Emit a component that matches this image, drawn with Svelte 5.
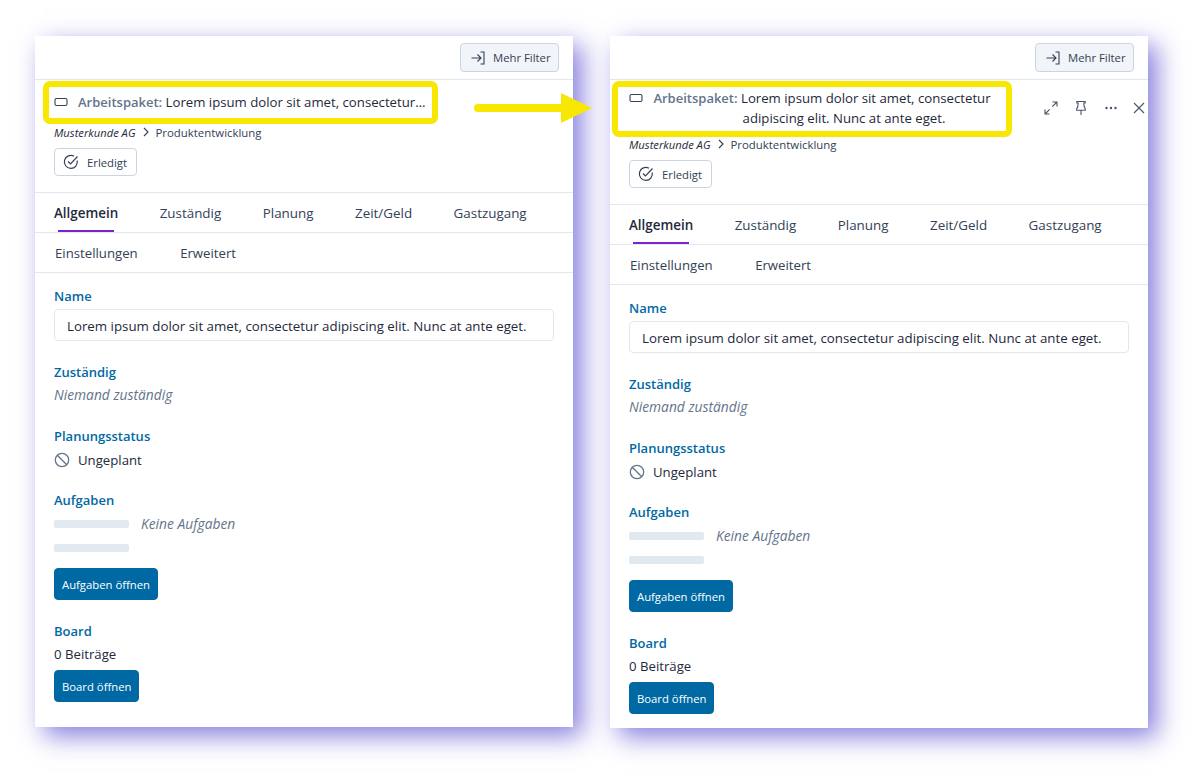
<script>
  const tabs = ['Allgemein', 'Zuständig', 'Planung', 'Zeit/Geld', 'Gastzugang'];
  const tabs2 = ['Einstellungen', 'Erweitert'];
  const title = 'Lorem ipsum dolor sit amet, consectetur adipiscing elit. Nunc at ante eget.';
</script>

{#snippet panel(open)}
  <section class="panel" class:open>
    <div class="topbar">
      <button class="filter">
        <svg width="16" height="16" viewBox="0 0 16 16" fill="none" stroke="#334155" stroke-width="1.1">
          <path d="M1.5 8h9M7.5 4.5 11 8l-3.5 3.5M10.5 2h3.5v12h-3.5" />
        </svg>
        Mehr Filter
      </button>
    </div>

    <div class="head">
      <div class="titlerow">
        <svg class="wp" width="14" height="10" viewBox="0 0 14 10" fill="none" stroke="#334155" stroke-width="1.1">
          <rect x="1" y="1.5" width="12" height="7" rx="1.5" />
        </svg>
        <h1 class="title">
          <span class="kind">Arbeitspaket:</span>
          {title}
        </h1>
        <div class="mark"></div>
        {#if open}
          <div class="actions">
            <svg width="16" height="16" viewBox="0 0 16 16" fill="none" stroke="#475569" stroke-width="1.1">
              <path d="M2 14 6.700 9.300M9.300 6.700 14 2M9.500 2H14v4.500M2 9.500V14h4.500" />
            </svg>
            <svg width="16" height="16" viewBox="0 0 16 16" fill="none" stroke="#475569" stroke-width="1.1">
              <path d="M3.800 1.500h8.400v1.500H10.800c0 3 .5 4.500 1.500 6v1.300H3.700V9c1-1.500 1.500-3 1.500-6H3.800zM8 10.300V15" />
            </svg>
            <svg width="16" height="16" viewBox="0 0 16 16" fill="#475569">
              <circle cx="3.500" cy="8" r="1.200" /><circle cx="8" cy="8" r="1.200" /><circle cx="12.500" cy="8" r="1.200" />
            </svg>
            <svg class="close" width="16" height="16" viewBox="0 0 16 16" fill="none" stroke="#475569" stroke-width="1.1">
              <path d="m3 3 10 10M13 3 3 13" />
            </svg>
          </div>
        {/if}
      </div>
      <div class="crumbs">
        <em>Musterkunde AG</em>
        <svg width="8" height="10" viewBox="0 0 8 10" fill="none" stroke="#334155" stroke-width="1.1"><path d="m2 1 4 4-4 4" /></svg>
        <span>Produktentwicklung</span>
      </div>
      <button class="done">
        <svg width="16" height="16" viewBox="0 0 16 16" fill="none" stroke="#334155" stroke-width="1.2">
          <path d="M14.200 6.500A6.500 6.500 0 1 1 11 2.200M5 7.500l2.500 2.500L14.500 2.500" />
        </svg>
        Erledigt
      </button>
    </div>

    <nav class="tabs">
      {#each tabs as t, i}
        <span class="tab" class:active={i === 0}>{t}</span>
      {/each}
    </nav>
    <nav class="tabs second">
      {#each tabs2 as t}
        <span class="tab">{t}</span>
      {/each}
    </nav>

    <div class="body">
      <div class="field name">
        <h2>Name</h2>
        <div class="input">{title}</div>
      </div>
      <div class="field">
        <h2>Zuständig</h2>
        <p class="muted">Niemand zuständig</p>
      </div>
      <div class="field">
        <h2>Planungsstatus</h2>
        <p class="status">
          <svg width="16" height="16" viewBox="0 0 16 16" fill="none" stroke="#64748b" stroke-width="1.3">
            <circle cx="8" cy="8" r="6.700" /><path d="m3.300 3.300 9.400 9.400" />
          </svg>
          Ungeplant
        </p>
      </div>
      <div class="field tasks">
        <h2>Aufgaben</h2>
        <div class="taskrow">
          <div class="bars"><i></i><i></i></div>
          <p class="muted">Keine Aufgaben</p>
        </div>
        <button class="primary">Aufgaben öffnen</button>
      </div>
      <div class="field board">
        <h2>Board</h2>
        <p>0 Beiträge</p>
        <button class="primary">Board öffnen</button>
      </div>
    </div>
  </section>
{/snippet}

<main class="page">
  {@render panel(false)}
  {@render panel(true)}
  <svg class="arrow" width="120" height="32" viewBox="0 0 120 32">
    <path d="M4 16h84" stroke="#f8e700" stroke-width="8" stroke-linecap="round" />
    <path d="M87 1v30l31-15z" fill="#f8e700" />
  </svg>
</main>

<style>
  :global(body) {
    margin: 0;
    background: #fff;
  }
  .page {
    position: relative;
    display: flex;
    gap: 37px;
    width: 1204px;
    height: 784px;
    box-sizing: border-box;
    padding: 36px 0 0 35px;
    font-family: "Open Sans", sans-serif;
    font-size: 13.200px;
    color: #1e293b;
    overflow: hidden;
  }
  .panel {
    width: 538px;
    height: 691px;
    align-self: flex-start;
    background: #fff;
    box-shadow: 9px 9px 24px rgba(70, 60, 205, 0.65);
  }
  .panel.open {
    height: 692px;
  }
  button {
    font: inherit;
    cursor: pointer;
  }
  .topbar {
    display: flex;
    justify-content: flex-end;
    height: 44px;
    padding: 7px 14px 0 0;
    box-sizing: border-box;
    border-bottom: 1px solid #e2e8f0;
  }
  .filter {
    display: flex;
    align-items: center;
    gap: 7px;
    height: 29px;
    width: 99px;
    padding: 0 0 0 9px;
    font-size: 11.300px;
    color: #334155;
    background: #f1f5f9;
    border: 1px solid #cbd5e1;
    border-radius: 4px;
  }
  .head {
    padding: 0 19px 16px;
    border-bottom: 1px solid #e2e8f0;
  }
  .titlerow {
    position: relative;
    display: flex;
    align-items: center;
    height: 44px;
  }
  .wp {
    flex: none;
    margin-right: 10px;
  }
  .title {
    margin: 0;
    width: 349px;
    font-size: 13.200px;
    font-weight: 400;
    line-height: 20px;
    white-space: nowrap;
    overflow: hidden;
    text-overflow: ellipsis;
    color: #1e293b;
  }
  .kind {
    font-size: 13px;
    font-weight: 600;
    color: #64748b;
  }
  .mark {
    position: absolute;
    left: -11px;
    top: 1px;
    width: 383px;
    height: 31px;
    border: 6px solid #f8e700;
    border-radius: 7px;
  }
  .open .titlerow {
    height: 56px;
    align-items: flex-start;
  }
  .open .wp {
    margin-top: 13px;
  }
  .open .title {
    margin: 8px 0 0 31px;
    width: 320px;
    overflow: visible;
    white-space: normal;
    text-align: center;
    text-indent: -44px;
  }
  .open .mark {
    left: -17px;
    width: 388px;
    height: 44px;
  }
  .actions {
    position: absolute;
    left: 414px;
    top: 20px;
    display: flex;
    gap: 14px;
  }
  .close {
    margin-left: -2px;
  }
  .crumbs {
    display: flex;
    align-items: center;
    gap: 6px;
    height: 16px;
    font-size: 11.400px;
    color: #334155;
  }
  .crumbs em {
    font-size: 11.200px;
    color: #1e293b;
  }
  .done {
    display: flex;
    align-items: center;
    gap: 8px;
    height: 28px;
    width: 83px;
    margin-top: 8px;
    padding: 0 0 0 8px;
    font-size: 11.300px;
    color: #334155;
    background: #fff;
    border: 1px solid #cbd5e1;
    border-radius: 4px;
  }
  .tabs {
    display: flex;
    gap: 41.500px;
    height: 39px;
    align-items: center;
    padding: 0 19px;
    font-size: 13.400px;
    border-bottom: 1px solid #e2e8f0;
    color: #334155;
  }
  .second {
    gap: 42.500px;
    padding-left: 20px;
    font-size: 13.200px;
  }
  .tab {
    position: relative;
    padding-top: 2px;
    line-height: 37px;
  }
  .active {
    font-weight: 600;
    color: #1e293b;
  }
  .active::after {
    content: "";
    position: absolute;
    left: 4px;
    right: 4px;
    bottom: 0;
    height: 2px;
    background: #7e22ce;
  }
  .body {
    padding: 14px 19px 0;
  }
  .field {
    margin-bottom: 18px;
  }
  .field h2 {
    margin: 0;
    font-size: 13px;
    line-height: 18px;
    font-weight: 600;
    color: #0069a3;
  }
  .field p {
    margin: 0;
    line-height: 28px;
  }
  .name .input {
    margin-top: 4px;
    height: 32px;
    box-sizing: border-box;
    padding-left: 12px;
    width: 500px;
    font-size: 13.300px;
    line-height: 32px;
    border: 1px solid #e2e8f0;
    border-radius: 4px;
    white-space: nowrap;
  }
  .name {
    margin-bottom: 22px;
  }
  .muted {
    font-size: 13.800px;
    font-style: italic;
    color: #64748b;
  }
  .field .status {
    display: flex;
    align-items: center;
    gap: 8px;
    height: 28px;
    padding-top: 2px;
    box-sizing: border-box;
  }
  .taskrow {
    display: flex;
    gap: 12px;
    margin-top: 11px;
  }
  .field .taskrow .muted {
    line-height: 20px;
    margin-top: -6px;
  }
  .bars {
    display: flex;
    flex-direction: column;
    gap: 16px;
  }
  .bars i {
    display: block;
    width: 75px;
    height: 8px;
    border-radius: 2px;
    background: #e2e8f0;
  }
  .primary {
    display: block;
    height: 32px;
    padding: 0 7px;
    font-size: 11.300px;
    color: #fff;
    background: #0069a3;
    border: 1px solid #0069a3;
    border-radius: 4px;
  }
  .tasks .primary {
    margin-top: 16px;
  }
  .tasks {
    margin-bottom: 22px;
  }
  .board {
    margin-bottom: 0;
  }
  .board .primary {
    margin-top: 2px;
  }
  .arrow {
    position: absolute;
    left: 474px;
    top: 92px;
    overflow: visible;
  }
</style>
